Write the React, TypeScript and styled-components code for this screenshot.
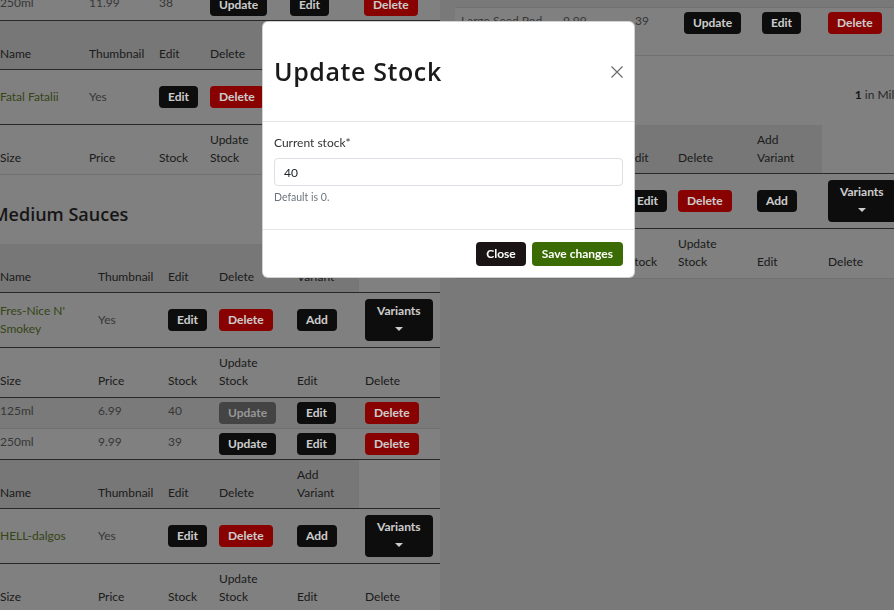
import React from "react";
import styled, { createGlobalStyle } from "styled-components";

const GlobalStyle = createGlobalStyle`
  *, *::before, *::after { box-sizing: border-box; }
  html, body { margin: 0; padding: 0; }
  body {
    width: 894px;
    height: 610px;
    overflow: hidden;
    background: #989898;
    font-family: Lato, "Noto Sans", Arial, sans-serif;
    font-size: 12px;
    line-height: 18px;
    color: #242424;
  }
`;

/* ---------- page ---------- */

const Page = styled.main`
  display: grid;
  grid-template-columns: 446px 446px;
  column-gap: 15px;
  align-items: start;
  width: 907px;
  margin: -10px 0 0 -6px;
`;

const Column = styled.section<{ $top?: number }>`
  background: #a0a0a0;
  margin-top: ${(p) => p.$top ?? 0}px;
`;

const SectionTitle = styled.h3`
  margin: 28px 0 19px -2px;
  font-family: "Open Sans", "Noto Sans", sans-serif;
  font-weight: 600;
  font-size: 18px;
  line-height: 22px;
  color: #1c1c1c;
`;

const TitleRow = styled.div`
  display: flex;
  align-items: center;
  justify-content: space-between;
  margin: 28px 0 19px;
  padding-left: 6px;
`;

const RowTitle = styled(SectionTitle)`
  margin: 0;
`;

const Count = styled.span`
  white-space: nowrap;
  color: #333;
  b {
    font-weight: 700;
    color: #1c1c1c;
  }
`;

/* ---------- tables ---------- */

const Table = styled.table`
  width: 446px;
  table-layout: fixed;
  border-collapse: separate;
  border-spacing: 0;
`;

const Col = styled.col<{ $w: number }>`
  width: ${(p) => p.$w}px;
`;

const HeadCell = styled.th<{ $shade?: boolean }>`
  padding: 6px;
  text-align: left;
  vertical-align: bottom;
  font-weight: 400;
  color: #242424;
  background: ${(p) => (p.$shade ? "#959595" : "transparent")};
  border-bottom: 1px solid #343434;
`;

const SubHeadCell = styled.th<{ $closed?: boolean }>`
  padding: 6px 6px 7px;
  text-align: left;
  vertical-align: bottom;
  font-weight: 400;
  color: #242424;
  border-bottom: 1px solid ${(p) => (p.$closed ? "#343434" : "#8e8e8e")};
`;

const ProductCell = styled.td`
  padding: 6px;
  vertical-align: middle;
  color: #464646;
  border-bottom: 1px solid #343434;
`;

const ProductName = styled.span`
  color: #44561d;
`;

const VariantCell = styled.td<{ $last?: boolean; $active?: boolean; $loose?: boolean }>`
  padding: ${(p) => (p.$loose ? "4px 6px 7px" : "4px 6px")};
  vertical-align: top;
  color: #464646;
  background: ${(p) => (p.$active ? "#999999" : "transparent")};
  border-top: ${(p) => (p.$loose ? "1px solid #8e8e8e" : "0")};
  border-bottom: 1px solid ${(p) => (p.$last ? "#343434" : "#8e8e8e")};
`;

/* ---------- buttons ---------- */

const tones = {
  dark: { bg: "#111111", fg: "#ffffff" },
  danger: { bg: "#ab0303", fg: "#ffffff" },
  muted: { bg: "#555555", fg: "#bdbdbd" },
};

const RowButton = styled.button<{ $tone?: keyof typeof tones }>`
  display: inline-flex;
  flex-direction: column;
  align-items: center;
  border: 0;
  border-radius: 4px;
  padding: 2px 9px;
  font-family: Lato, "Noto Sans", sans-serif;
  font-weight: 700;
  font-size: 12px;
  line-height: 18px;
  color: ${(p) => tones[p.$tone ?? "dark"].fg};
  background: ${(p) => tones[p.$tone ?? "dark"].bg};
  cursor: pointer;
`;

const StackButton = styled(RowButton)`
  padding: 3px 12px;
`;

const Caret = styled.span`
  display: block;
  width: 0;
  height: 0;
  margin: 7px auto;
  border-left: 4px solid transparent;
  border-right: 4px solid transparent;
  border-top: 4px solid currentColor;
`;

/* ---------- modal ---------- */

const Backdrop = styled.div`
  position: fixed;
  inset: 0;
  background: rgba(0, 0, 0, 0.2);
`;

const Dialog = styled.div`
  position: fixed;
  top: 21px;
  left: 262px;
  width: 373px;
  background: #ffffff;
  border: 1px solid rgba(0, 0, 0, 0.18);
  border-radius: 6px;
  color: #212529;
`;

const DialogHeader = styled.header`
  display: flex;
  align-items: center;
  justify-content: space-between;
  height: 100px;
  padding: 0 11px;
  border-bottom: 1px solid #e3e5e8;
`;

const DialogTitle = styled.h2`
  margin: 0 0 2px;
  font-family: "Open Sans", "Noto Sans", sans-serif;
  font-weight: 600;
  font-size: 25px;
  line-height: 30px;
  color: #1a1a1a;
  letter-spacing: 0.6px;
`;

const CloseX = styled.button`
  display: flex;
  border: 0;
  padding: 0;
  background: none;
  cursor: pointer;
`;

const DialogBody = styled.div`
  padding: 12px 11px 24px;
`;

const Label = styled.label`
  display: block;
  margin-bottom: 6px;
  color: #333333;
`;

const Input = styled.input`
  display: block;
  width: 100%;
  height: 28px;
  padding: 0 9px;
  border: 1px solid #dcdfe3;
  border-radius: 4px;
  font-family: Lato, "Noto Sans", sans-serif;
  font-size: 12px;
  color: #212529;
  outline: none;
`;

const Help = styled.div`
  margin-top: 3px;
  font-size: 10.5px;
  line-height: 16px;
  color: #6c757d;
`;

const DialogFooter = styled.footer`
  display: flex;
  justify-content: flex-end;
  gap: 6px;
  padding: 12px 11px 11px;
  border-top: 1px solid #e3e5e8;
`;

const ModalButton = styled.button<{ $tone: "close" | "save" }>`
  height: 24px;
  padding: 0 10px;
  border: 0;
  border-radius: 4px;
  font-family: Lato, "Noto Sans", sans-serif;
  font-weight: 700;
  font-size: 12px;
  line-height: 24px;
  color: #ffffff;
  background: ${(p) => (p.$tone === "close" ? "#1b1414" : "#3a6b04")};
  cursor: pointer;
`;

/* ---------- data ---------- */

type Variant = { size: string; price: string; stock: string; active?: boolean };
type Product = { name: string; thumb: string; variants: Variant[] };

const WIDTHS_A = [89, 70, 51, 80, 74, 82];
const WIDTHS_B = [98, 70, 51, 78, 68, 81];
const WIDTHS_C = [98, 69, 50, 79, 71, 79];
const WIDTHS_D = [102, 72, 49, 78, 66, 79];

const Cols = ({ widths }: { widths: number[] }) => (
  <colgroup>
    {widths.map((w, i) => (
      <Col key={i} $w={w} />
    ))}
  </colgroup>
);

const VariantRow = ({ v, last, loose }: { v: Variant; last?: boolean; loose?: boolean }) => (
  <tr>
    <VariantCell $last={last} $active={v.active} $loose={loose}>{v.size}</VariantCell>
    <VariantCell $last={last} $active={v.active} $loose={loose}>{v.price}</VariantCell>
    <VariantCell $last={last} $active={v.active} $loose={loose}>{v.stock}</VariantCell>
    <VariantCell $last={last} $active={v.active} $loose={loose}>
      <RowButton $tone={v.active ? "muted" : "dark"}>Update</RowButton>
    </VariantCell>
    <VariantCell $last={last} $active={v.active} $loose={loose}>
      <RowButton>Edit</RowButton>
    </VariantCell>
    <VariantCell $last={last} $active={v.active} $loose={loose}>
      <RowButton $tone="danger">Delete</RowButton>
    </VariantCell>
  </tr>
);

const ProductTable = ({ product, widths }: { product: Product; widths: number[] }) => {
  const hasRows = product.variants.length > 0;
  return (
    <Table>
      <Cols widths={widths} />
      <thead>
        <tr>
          <HeadCell $shade>Name</HeadCell>
          <HeadCell $shade>Thumbnail</HeadCell>
          <HeadCell $shade>Edit</HeadCell>
          <HeadCell $shade>Delete</HeadCell>
          <HeadCell $shade>
            Add
            <br />
            Variant
          </HeadCell>
          <HeadCell />
        </tr>
      </thead>
      <tbody>
        <tr>
          <ProductCell>
            <ProductName>{product.name}</ProductName>
          </ProductCell>
          <ProductCell>{product.thumb}</ProductCell>
          <ProductCell>
            <RowButton>Edit</RowButton>
          </ProductCell>
          <ProductCell>
            <RowButton $tone="danger">Delete</RowButton>
          </ProductCell>
          <ProductCell>
            <RowButton>Add</RowButton>
          </ProductCell>
          <ProductCell>
            <StackButton>
              Variants
              <Caret />
            </StackButton>
          </ProductCell>
        </tr>
        <tr>
          <SubHeadCell $closed={hasRows}>Size</SubHeadCell>
          <SubHeadCell $closed={hasRows}>Price</SubHeadCell>
          <SubHeadCell $closed={hasRows}>Stock</SubHeadCell>
          <SubHeadCell $closed={hasRows}>
            Update
            <br />
            Stock
          </SubHeadCell>
          <SubHeadCell $closed={hasRows}>Edit</SubHeadCell>
          <SubHeadCell $closed={hasRows}>Delete</SubHeadCell>
        </tr>
        {product.variants.map((v, i) => (
          <VariantRow key={v.size} v={v} last={i === product.variants.length - 1} />
        ))}
      </tbody>
    </Table>
  );
};

const fatal: Product = { name: "Fatal Fatalii", thumb: "Yes", variants: [] };
const fresNice: Product = {
  name: "Fres-Nice N' Smokey",
  thumb: "Yes",
  variants: [
    { size: "125ml", price: "6.99", stock: "40", active: true },
    { size: "250ml", price: "9.99", stock: "39" },
  ],
};
const hellDalgos: Product = { name: "HELL-dalgos", thumb: "Yes", variants: [] };
const mildOne: Product = { name: "Mild Mannered", thumb: "Yes", variants: [] };

export default function App() {
  return (
    <>
      <GlobalStyle />
      <Page>
        <Column>
          <Table>
            <Cols widths={WIDTHS_A} />
            <tbody>
              <VariantRow v={{ size: "250ml", price: "11.99", stock: "38" }} last />
            </tbody>
          </Table>
          <ProductTable product={fatal} widths={WIDTHS_A} />
          <SectionTitle>Medium Sauces</SectionTitle>
          <ProductTable product={fresNice} widths={WIDTHS_B} />
          <ProductTable product={hellDalgos} widths={WIDTHS_B} />
        </Column>
        <Column $top={17}>
          <Table>
            <Cols widths={WIDTHS_D} />
            <tbody>
              <VariantRow v={{ size: "Large Seed Pod Mix", price: "9.99", stock: "39" }} loose />
            </tbody>
          </Table>
          <TitleRow>
            <RowTitle>Mild Sauces</RowTitle>
            <Count>
              <b>1</b> in Mild
            </Count>
          </TitleRow>
          <ProductTable product={mildOne} widths={WIDTHS_C} />
        </Column>
      </Page>

      <Backdrop />
      <Dialog role="dialog" aria-modal="true">
        <DialogHeader>
          <DialogTitle>Update Stock</DialogTitle>
          <CloseX aria-label="Close">
            <svg width="12" height="12" viewBox="0 0 12 12">
              <path d="M0.5 0.5 L11.5 11.5 M11.5 0.5 L0.5 11.5" stroke="#6b6b6b" strokeWidth="1.2" fill="none" />
            </svg>
          </CloseX>
        </DialogHeader>
        <DialogBody>
          <Label htmlFor="stock">Current stock*</Label>
          <Input id="stock" defaultValue="40" />
          <Help>Default is 0.</Help>
        </DialogBody>
        <DialogFooter>
          <ModalButton $tone="close">Close</ModalButton>
          <ModalButton $tone="save">Save changes</ModalButton>
        </DialogFooter>
      </Dialog>
    </>
  );
}
